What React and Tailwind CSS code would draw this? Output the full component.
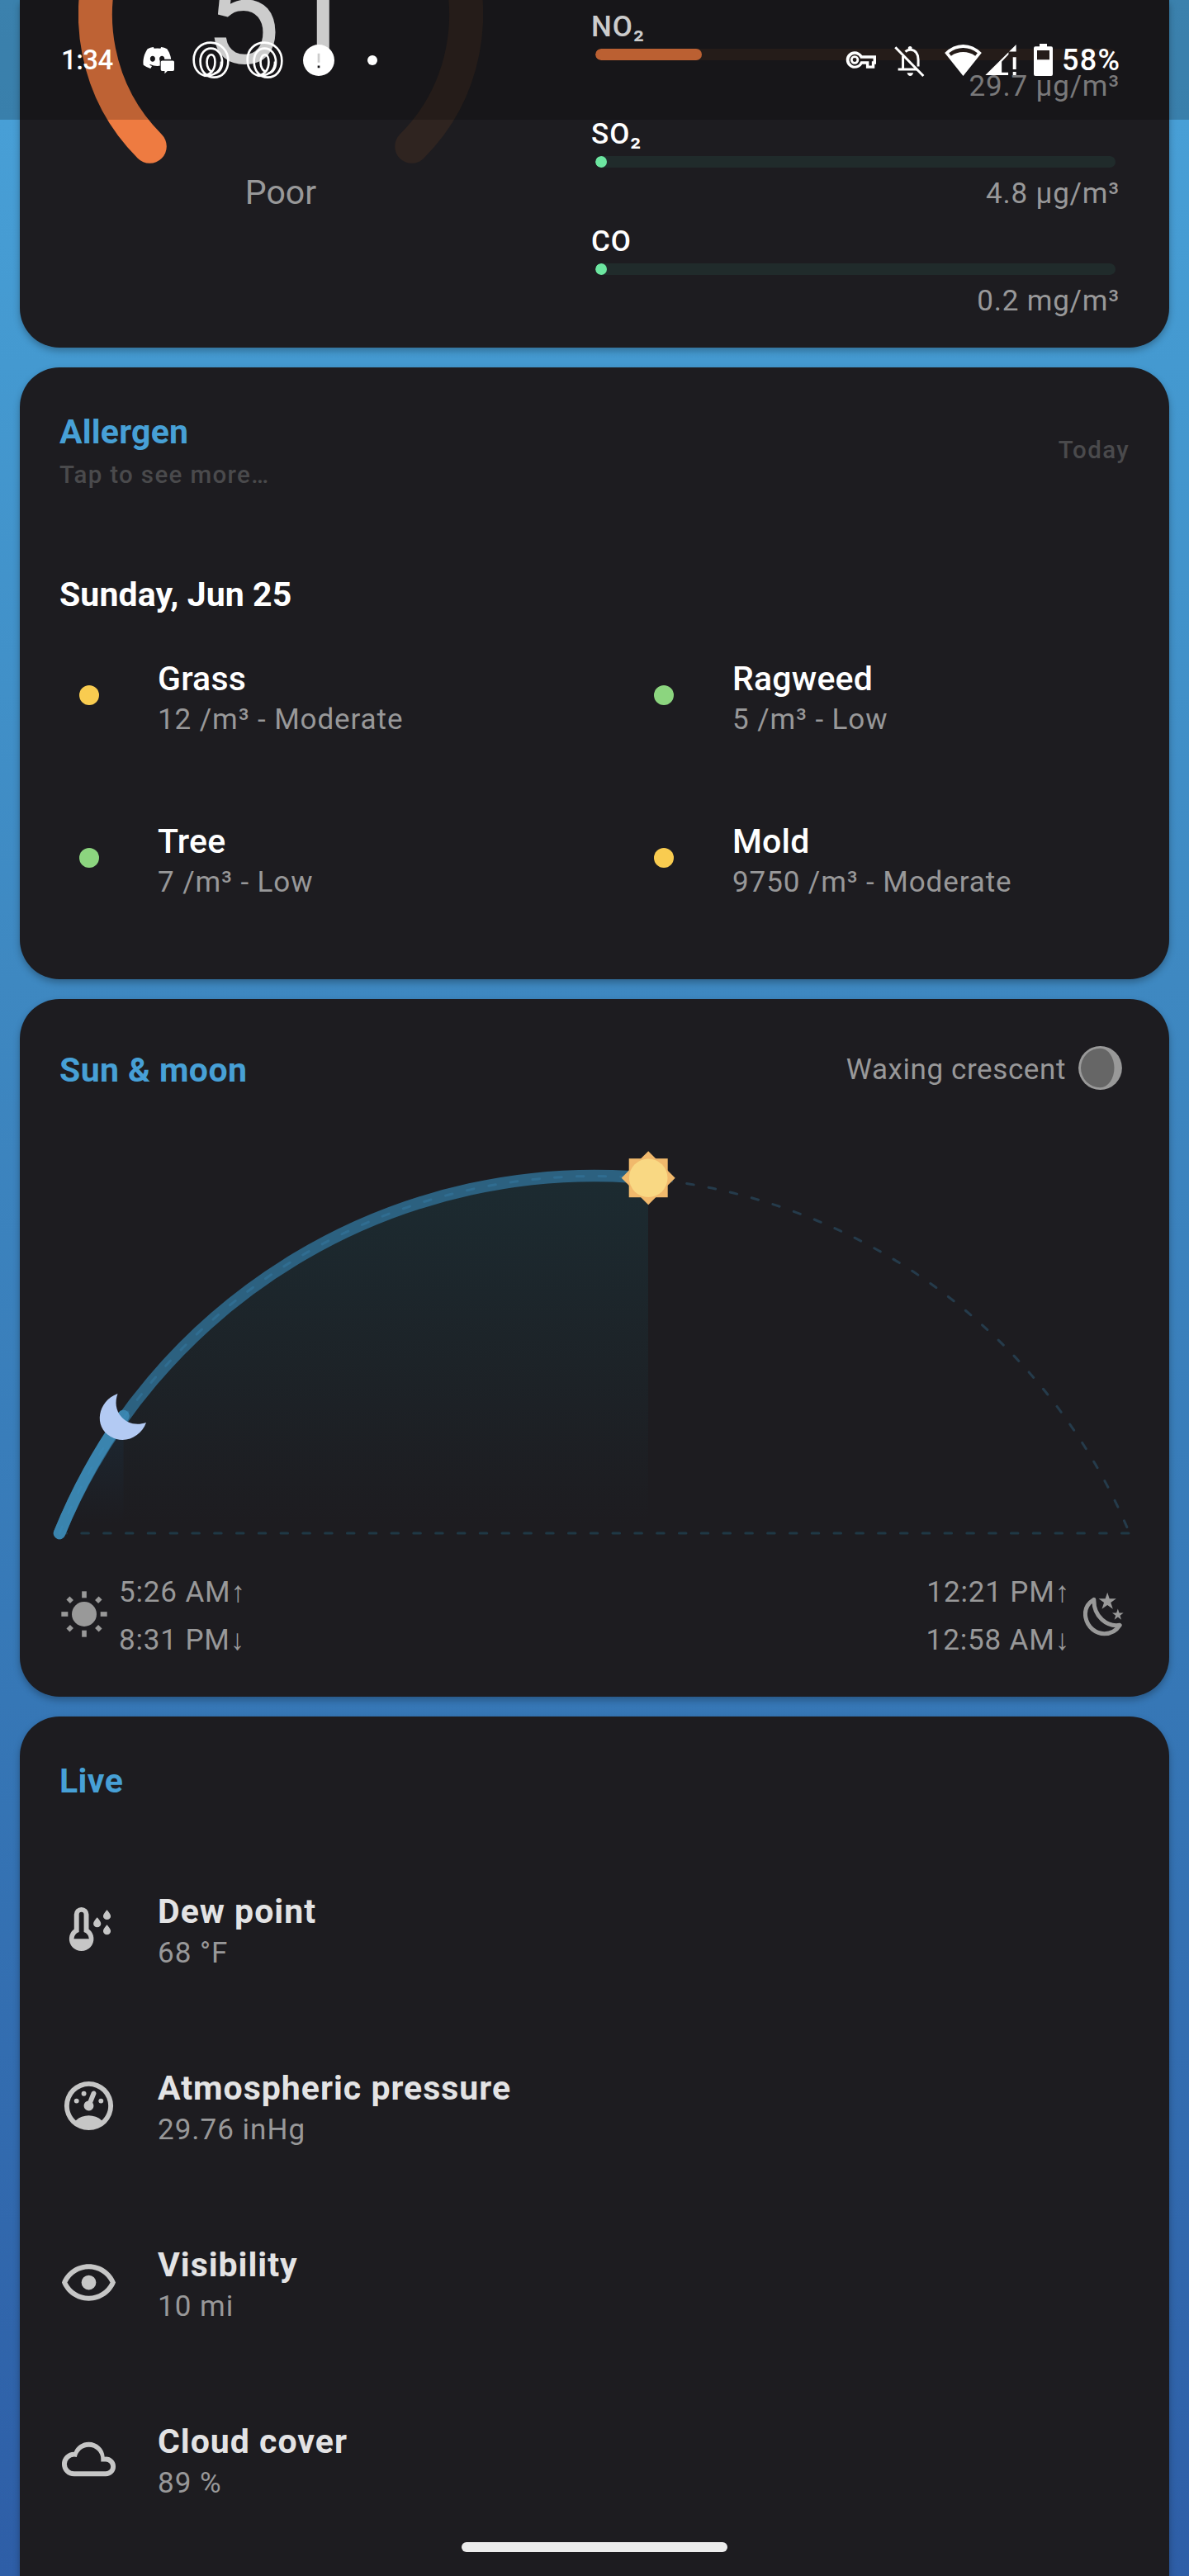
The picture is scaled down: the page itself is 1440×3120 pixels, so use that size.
import { FaDiscord } from "react-icons/fa";

const GREY = "text-[#989899]";

function Swirl() {
  return (
    <svg viewBox="246 58 140 142" className="h-[47px] w-[47px] shrink-0" fill="none" stroke="#fff" strokeWidth="8">
      <path d="M300 188 C268 184 253 158 253 128 C253 90 281 66 315 66 C352 66 379 96 379 132 C379 168 358 193 327 193 C297 193 277 168 277 134 C277 106 294 87 315 87 C341 87 357 110 357 137 C357 160 345 178 328 178" />
      <path d="M291 188 C322 180 331 160 331 137 C331 122 326 110 317 110 C308 110 301 121 301 137 C301 155 309 170 320 172" />
      <path d="M300 188 C340 184 354 160 354 135" />
    </svg>
  );
}

function StatusBar() {
  return (
    <div className="absolute inset-x-0 top-0 z-10 flex h-[145px] items-center bg-black/20 pl-[74px] pr-[81px] text-white">
      <div className="w-[98px] text-[33px] font-medium tracking-[-0.6px]">1:34</div>
      <div className="relative h-[35px] w-[40px] shrink-0">
        <FaDiscord className="h-[30px] w-[37px]" />
        <svg viewBox="130 136 56 56" className="absolute left-[21px] top-[16px] h-[19px] w-[19px]">
          <path d="M132 138H187V184H162L148 194V184H132Z" fill="#171719" />
          <path d="M140 143H178Q183 143 183 148V175Q183 180 178 180H159L149 190V180H140Q135 180 135 175V148Q135 143 140 143Z" fill="#fff" />
        </svg>
      </div>
      <div className="ml-5 flex items-center gap-[18px]">
        <Swirl />
        <Swirl />
      </div>
      <svg viewBox="650 73 112 113" className="ml-[23px] h-[38px] w-[38px]">
        <path fill="#fff" fillRule="evenodd" d="M706 73A56 56 0 0 1 706 186A56 56 0 0 1 706 73ZM702 105V138H710V105ZM702 149V157H710V149Z" />
      </svg>
      <div className="ml-10 size-3 rounded-full bg-white" />

      <div className="ml-auto flex items-center">
        <svg viewBox="1 6 22 12" className="h-[21px] w-[38px]" fill="#fff">
          <path d="M22 18h-6v-3h-2.68c-1.14 1.82-3.14 3-5.32 3-3.31 0-6-2.69-6-6s2.69-6 6-6c2.18 0 4.18 1.18 5.32 3H23v6h-1v3zm-4-2h2v-3h1v-2H12l-.2-.6A4 4 0 1 0 12 13.4l.2-.4H18v3zM8 15a3 3 0 1 1 0-6 3 3 0 0 1 0 6zm0-4.4a1.4 1.4 0 1 0 0 2.800 1.4 1.4 0 0 0 0-2.800z" fillRule="evenodd" />
        </svg>
        <svg viewBox="218 73 110 115" className="ml-[22px] mt-[2px] h-[38px] w-[37px]" fill="none" stroke="#fff" strokeWidth="9">
          <path d="M221 80L324 185" />
          <path d="M231 161H301M249 112V160" />
          <path d="M258 96C268 86 288 86 298 100C304 108 305 116 305 125V150" />
          <path d="M268 90V80Q275 72 282 80V90Z" fill="#fff" stroke="none" />
          <path d="M264 174H287Q284 185 275.500 185Q267 185 264 174Z" fill="#fff" stroke="none" />
        </svg>
        <svg viewBox="403 70 134 114" className="ml-6 h-[38px] w-[45px]" fill="#fff">
          <path fillRule="evenodd" d="M470 184L403 100Q433 70 470 70Q507 70 537 100ZM418 101L426 111Q446 97 470 97Q494 97 514 111L522 101Q498 82 470 82Q442 82 418 101Z" />
        </svg>
        <svg viewBox="549 72 113 112" className="ml-1 h-[37px] w-[38px]" fill="#fff">
          <path d="M549 184L634 100V108L609 135V174H633V184ZM636 98L662 72V98ZM650 118H662V163H650ZM650 172H662V184H650Z" />
        </svg>
        <svg viewBox="726 69 69 117" className="ml-[21px] h-[39px] w-[23px]" fill="#fff">
          <path fillRule="evenodd" d="M747 69H774V79H789Q795 79 795 85V180Q795 186 789 186H732Q726 186 726 180V85Q726 79 732 79H747ZM738 93V127H783V93Z" />
        </svg>
        <div className="ml-[11px] w-[73px] text-[36px] font-medium tracking-[1.300px]">58%</div>
      </div>
    </div>
  );
}

const pollutants = [
  { name: "NO₂", value: "29.7 µg/m³", track: "bg-[#2f2320]", fill: "w-[129px] bg-[#ea793f]" },
  { name: "SO₂", value: "4.8 µg/m³", track: "bg-[#202b2b]", fill: "w-[14px] bg-[#6ce6a0]" },
  { name: "CO", value: "0.2 mg/m³", track: "bg-[#202b2b]", fill: "w-[14px] bg-[#6ce6a0]" },
];

function AirQuality() {
  return (
    <section className="flex h-[421px] justify-between rounded-b-[48px] bg-[#1d1c20] pr-[60px] shadow-[0_4px_9px_rgba(0,0,0,0.28)]">
      <div className="relative flex w-[632px] flex-col items-center">
        <svg viewBox="95 0 490 202" className="h-[202px] w-[490px]" fill="none" strokeWidth="41" strokeLinecap="round">
          <path d="M340 -206A224.500 224.500 0 0 1 498.700 177.300" stroke="#2f2420" />
          <path d="M181.300 177.300A224.500 224.500 0 0 1 340 -206" stroke="#ee7b41" />
        </svg>
        <div className="absolute inset-x-0 top-0 text-center text-[165px] leading-[40px] text-white">51</div>
        <div className={`mt-[11px] text-[41px] leading-[40px] ${GREY}`}>Poor</div>
      </div>
      <div className="flex w-[640px] flex-col gap-[18px] pt-[13px]">
        {pollutants.map((p) => (
          <div key={p.name}>
            <div className="text-[35px] font-medium leading-[40px] tracking-[1px] text-white">{p.name}</div>
            <div className={`ml-[5px] mt-[6px] h-[14px] w-[630px] overflow-hidden rounded-full ${p.track}`}>
              <div className={`h-full rounded-full ${p.fill}`} />
            </div>
            <div className={`mt-[12px] text-right text-[35px] leading-[40px] tracking-[0.800px] ${GREY}`}>{p.value}</div>
          </div>
        ))}
      </div>
    </section>
  );
}

const allergens = [
  { name: "Grass", detail: "12 /m³ - Moderate", dot: "bg-[#f9cc50]" },
  { name: "Ragweed", detail: "5 /m³ - Low", dot: "bg-[#8cd57f]" },
  { name: "Tree", detail: "7 /m³ - Low", dot: "bg-[#8cd57f]" },
  { name: "Mold", detail: "9750 /m³ - Moderate", dot: "bg-[#f9cc50]" },
];

function Allergen() {
  return (
    <section className="h-[741px] rounded-[48px] bg-[#1d1c20] pt-[54px] shadow-[0_4px_9px_rgba(0,0,0,0.28)]">
      <div className="flex items-center justify-between px-12 text-[#4a4a4c]">
        <div>
          <h2 className="text-[41px] font-bold leading-[48px] tracking-[0.200px] text-[#47a0d6]">Allergen</h2>
          <p className="mt-[8px] text-[29.500px] font-medium leading-[40px] tracking-[1.350px]">Tap to see more…</p>
        </div>
        <p className="mb-1 text-[29.500px] font-medium leading-[40px] tracking-[1.350px]">Today</p>
      </div>
      <h3 className="mt-[101px] px-12 text-[41px] font-bold leading-[48px] tracking-[0.100px] text-white">Sunday, Jun 25</h3>
      <div className="mt-[54px] grid grid-cols-2 gap-y-[98px]">
        {allergens.map((a) => (
          <div key={a.name} className="flex items-start">
            <div className={`ml-[72px] mt-[32px] size-6 rounded-full ${a.dot}`} />
            <div className="ml-[71px]">
              <div className="text-[41px] font-medium leading-[48px] tracking-[0.200px] text-white">{a.name}</div>
              <div className={`text-[35px] leading-[51px] tracking-[0.900px] ${GREY}`}>{a.detail}</div>
            </div>
          </div>
        ))}
      </div>
    </section>
  );
}

function SunPath() {
  return (
    <svg viewBox="24 1380 1392 490" className="block h-[490px] w-[1392px]" fill="none">
      <defs>
        <linearGradient id="dayFill" gradientUnits="userSpaceOnUse" x1="0" y1="1424" x2="0" y2="1845">
          <stop offset="0" stopColor="#1c2b31" />
          <stop offset="1" stopColor="#1d1c20" />
        </linearGradient>
        <linearGradient id="nightFill" gradientUnits="userSpaceOnUse" x1="0" y1="1714" x2="0" y2="1845">
          <stop offset="0" stopColor="#1c2833" />
          <stop offset="1" stopColor="#1d1c20" />
        </linearGradient>
      </defs>
      <path d="M72 1857A701.700 701.700 0 0 1 785 1427V1857Z" fill="url(#dayFill)" />
      <path d="M72 1857A701.700 701.700 0 0 1 149.500 1714V1857Z" fill="url(#nightFill)" />
      <path d="M72 1857H1368" stroke="#1f3845" strokeWidth="3" strokeDasharray="8.600 18.200" strokeLinecap="round" />
      <path d="M72 1857A701.700 701.700 0 0 1 785 1427" stroke="#2c6180" strokeWidth="14.500" strokeLinecap="round" />
      <path d="M72 1857A701.700 701.700 0 0 1 149.500 1715" stroke="#3a84ae" strokeWidth="14.500" strokeLinecap="round" />
      <path d="M72 1857A701.700 701.700 0 0 1 1368 1857" stroke="#3b8fc0" strokeOpacity="0.27" strokeWidth="3" strokeDasharray="8.600 18.200" strokeLinecap="round" />
      <path d="M142.500 1688C118 1697 113 1728 134 1740C151 1750 171 1740 177 1723C165 1727 154 1724 147 1716C140 1708 139 1698 142.500 1688Z" fill="#b3caf3" />
      <g fill="#f1b96c">
        <rect x="761.700" y="1403.200" width="47" height="47" />
        <rect x="762.200" y="1403.700" width="46" height="46" transform="rotate(45 785.200 1426.700)" />
      </g>
      <circle cx="785.200" cy="1426.700" r="23.300" fill="#f9d883" />
    </svg>
  );
}

const rays = [0, 90, 180, 270];
const arrow = "font-['Liberation_Sans',sans-serif]";

function SunMoon() {
  return (
    <section className="h-[845px] rounded-[48px] bg-[#1d1c20] shadow-[0_4px_9px_rgba(0,0,0,0.28)]">
      <div className="flex h-[170px] items-center pl-12 pr-[57px]">
        <h2 className="mt-px text-[41px] font-bold leading-[48px] tracking-[0.400px] text-[#47a0d6]">Sun &amp; moon</h2>
        <p className={`ml-auto mt-px text-[35px] leading-[48px] tracking-[0.600px] ${GREY}`}>Waxing crescent</p>
        <svg viewBox="0 0 53 53" className="mb-1 ml-[15px] size-[53px]">
          <circle cx="26.500" cy="26.500" r="26.400" fill="#999" />
          <path d="M26.500 2.800A23.500 23.700 0 0 0 26.500 50.200A17 23.700 0 0 0 26.500 2.800Z" fill="#666" />
        </svg>
      </div>
      <SunPath />
      <div className={`mt-[29px] flex items-center pl-[50px] pr-[55px] text-[35px] leading-[57px] tracking-[0.850px] ${GREY}`}>
        <svg viewBox="42 80 168 168" className="mb-1 size-[56px]" fill="#999">
          <circle cx="126" cy="164" r="45" />
          {rays.map((a) => (
            <g key={a} transform={`rotate(${a} 126 164)`}>
              <rect x="117.500" y="81" width="17" height="24" />
              <rect x="117.500" y="81" width="17" height="19" transform="rotate(45 126 164)" />
            </g>
          ))}
        </svg>
        <div className="ml-[14px]">
          <div>5:26 AM<span className={arrow}>↑</span></div>
          <div>8:31 PM<span className={arrow}>↓</span></div>
        </div>
        <div className="ml-auto text-right">
          <div>12:21 PM<span className={arrow}>↑</span></div>
          <div>12:58 AM<span className={arrow}>↓</span></div>
        </div>
        <svg viewBox="608 84 146 162" className="mb-1 ml-[16px] h-[54px] w-[49px]" fill="#999">
          <path d="M646 112C620 128 611 150 616 177C623 214 654 236 684 236C708 236 728 224 740 205C694 212 645 176 646 112Z" fill="none" stroke="#999" strokeWidth="15" strokeLinejoin="round" />
          <path d="M695 86L702.600 109H727L707.300 123.200L715 146L695 132L675 146L682.700 123.200L663 109H687.400Z" />
          <path d="M733 145.500L738 160.500H753.500L741 170L745.500 185L733 175.800L720.500 185L725 170L712.500 160.500H728Z" />
        </svg>
      </div>
    </section>
  );
}

const live = [
  {
    name: "Dew point",
    value: "68 °F",
    icon: (
      <>
        <path d="M12 12V6A3 3 0 0 0 6 6V12A5 5 0 1 0 12 12ZM9 5A1 1 0 0 1 10 6V13.200A3.200 3.200 0 0 1 12.100 16H5.900A3.200 3.200 0 0 1 8 13.200V6A1 1 0 0 1 9 5Z" fillRule="evenodd" />
        <path d="M15.450 7.200S13.900 8.900 13.900 9.800A1.550 1.450 0 0 0 17 9.800C17 8.900 15.450 7.200 15.450 7.200ZM19.450 4.100S17.900 5.800 17.900 6.700A1.550 1.450 0 0 0 21 6.700C21 5.800 19.450 4.100 19.450 4.100ZM19.450 10.200S17.900 11.900 17.900 12.800A1.550 1.450 0 0 0 21 12.800C21 11.900 19.450 10.200 19.450 10.200Z" />
      </>
    ),
  },
  {
    name: "Atmospheric pressure",
    value: "29.76 inHg",
    icon: (
      <path d="M12,2A10,10 0 0,0 2,12A10,10 0 0,0 12,22A10,10 0 0,0 22,12A10,10 0 0,0 12,2M12,4A8,8 0 0,1 20,12C20,14.4 19,16.5 17.3,18C15.9,16.7 14,16 12,16C10,16 8.200,16.7 6.7,18C5,16.5 4,14.4 4,12A8,8 0 0,1 12,4M14,5.89C13.62,5.9 13.26,6.15 13.1,6.54L11.81,9.77L11.71,10C11,10.13 10.41,10.6 10.14,11.26C9.73,12.29 10.23,13.45 11.26,13.86C12.29,14.27 13.45,13.77 13.86,12.74C14.12,12.08 14,11.32 13.57,10.76L13.67,10.5L14.96,7.29L14.97,7.26C15.17,6.75 14.92,6.17 14.41,5.96C14.28,5.91 14.15,5.89 14,5.89M10,6A1,1 0 0,0 9,7A1,1 0 0,0 10,8A1,1 0 0,0 11,7A1,1 0 0,0 10,6M7,9A1,1 0 0,0 6,10A1,1 0 0,0 7,11A1,1 0 0,0 8,10A1,1 0 0,0 7,9M17,9A1,1 0 0,0 16,10A1,1 0 0,0 17,11A1,1 0 0,0 18,10A1,1 0 0,0 17,9Z" />
    ),
  },
  {
    name: "Visibility",
    value: "10 mi",
    icon: (
      <path d="M12,9A3,3 0 0,1 15,12A3,3 0 0,1 12,15A3,3 0 0,1 9,12A3,3 0 0,1 12,9M12,4.5C17,4.5 21.27,7.61 23,12C21.27,16.39 17,19.5 12,19.5C7,19.5 2.73,16.39 1,12C2.73,7.61 7,4.5 12,4.5M3.18,12C4.83,15.36 8.24,17.5 12,17.5C15.76,17.5 19.17,15.36 20.82,12C19.17,8.64 15.76,6.5 12,6.5C8.24,6.5 4.83,8.64 3.18,12Z" />
    ),
  },
  {
    name: "Cloud cover",
    value: "89 %",
    icon: (
      <path d="M6,19A5,5 0 0,1 1,14A5,5 0 0,1 6,9C7,6.65 9.3,5 12,5C15.43,5 18.24,7.66 18.5,11.03L19,11A4,4 0 0,1 23,15A4,4 0 0,1 19,19H6M19,13H17V12A5,5 0 0,0 12,7C9.5,7 7.45,8.82 7.06,11.19C6.73,11.07 6.37,11 6,11A3,3 0 0,0 3,14A3,3 0 0,0 6,17H19A2,2 0 0,0 21,15A2,2 0 0,0 19,13Z" />
    ),
  },
];

function Live() {
  return (
    <section className="h-[1100px] shrink-0 rounded-t-[48px] bg-[#1d1c20] px-12 pt-[54px] shadow-[0_4px_9px_rgba(0,0,0,0.28)]">
      <h2 className="text-[41px] font-bold leading-[48px] tracking-[0.400px] text-[#47a0d6]">Live</h2>
      <div className="mt-[110px] flex flex-col gap-[113px]">
        {live.map((l) => (
          <div key={l.name} className="flex items-start">
            <svg viewBox="0 0 24 24" className="mt-[10px] size-[71px]" fill="#c6c6c6">{l.icon}</svg>
            <div className="ml-12">
              <div className="text-[41px] font-bold leading-[48px] tracking-[1px] text-[#e3e3e4]">{l.name}</div>
              <div className={`text-[35px] leading-[53px] tracking-[1px] ${GREY}`}>{l.value}</div>
            </div>
          </div>
        ))}
      </div>
    </section>
  );
}

export default function App() {
  return (
    <div className="relative h-[3120px] w-[1440px] overflow-hidden bg-[linear-gradient(180deg,#4aa2d9_0px,#4499d0_440px,#3e88c1_1190px,#3677b6_2060px,#2e5ea7_3120px)] font-['Roboto',sans-serif]">
      <StatusBar />
      <main className="flex flex-col gap-6 px-6">
        <AirQuality />
        <Allergen />
        <SunMoon />
        <Live />
      </main>
      <div className="absolute bottom-[29px] left-[559px] h-[12px] w-[322px] rounded-full bg-[#ececec]" />
    </div>
  );
}
